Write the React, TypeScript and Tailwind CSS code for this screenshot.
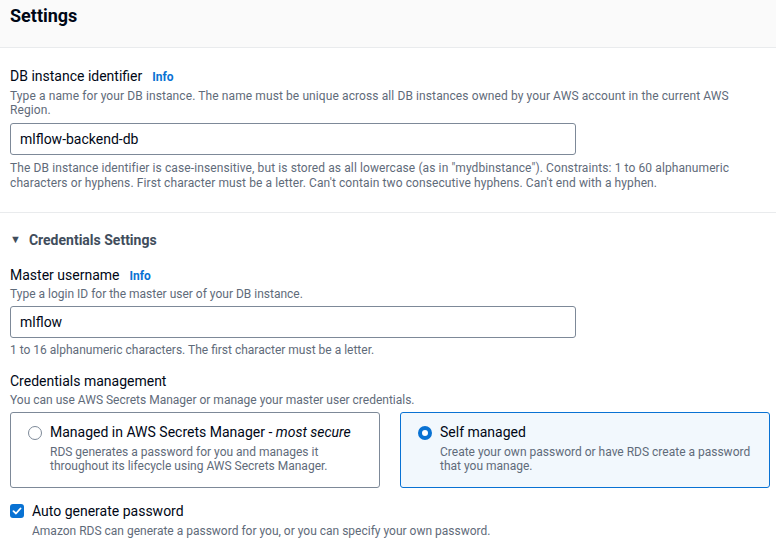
import React from "react";

const font = { fontFamily: 'Roboto, "Noto Sans", sans-serif' };

function Info() {
  return <span className="ml-[10px] text-[12px] font-bold text-[#0972d3]">Info</span>;
}

export default function App() {
  return (
    <div className="w-[776px] h-[540px] overflow-hidden bg-white text-[#000716]" style={font}>
      <div className="h-[48px] bg-[#fafafa] border-b border-[#e9ebed] px-[10px] pt-[3px]">
        <h2 className="text-[18px] font-bold leading-[26px]">Settings</h2>
      </div>
      <div className="px-[10px] pt-[17px]">
        <div className="flex items-baseline text-[14px] leading-[22px]">
          <span>DB instance identifier</span>
          <Info />
        </div>
        <p className="text-[12px] leading-[14px] text-[#5f6b7a] mt-[1px] pr-[30px] tracking-[0.1px]">
          Type a name for your DB instance. The name must be unique across all DB instances owned by your AWS account in the current AWS Region.
        </p>
        <div className="mt-[6px] w-[566px] h-[32px] border border-[#7d8998] rounded-[3px] flex items-center px-[9px] text-[14px]">
          mlflow-backend-db
        </div>
        <p className="text-[12px] leading-[15px] text-[#5f6b7a] mt-[6px] pr-[30px] tracking-[0.1px]">
          The DB instance identifier is case-insensitive, but is stored as all lowercase (as in "mydbinstance"). Constraints: 1 to 60 alphanumeric characters or hyphens. First character must be a letter. Can't contain two consecutive hyphens. Can't end with a hyphen.
        </p>
      </div>
      <div className="mt-[21px] border-t border-[#e9ebed]" />
      <div className="px-[10px] pt-[16px]">
        <div className="flex items-center text-[14px] font-bold leading-[22px] text-[#414d5c]">
          <span className="text-[11px] mr-[8px] text-[#414d5c]">▼</span>
          Credentials Settings
        </div>
        <div className="flex items-baseline text-[14px] leading-[22px] mt-[13px]">
          <span>Master username</span>
          <Info />
        </div>
        <p className="text-[12px] leading-[14px] text-[#5f6b7a]">
          Type a login ID for the master user of your DB instance.
        </p>
        <div className="mt-[5px] w-[566px] h-[32px] border border-[#7d8998] rounded-[3px] flex items-center px-[9px] text-[14px]">
          mlflow
        </div>
        <p className="text-[12px] leading-[15px] text-[#5f6b7a] mt-[5px]">
          1 to 16 alphanumeric characters. The first character must be a letter.
        </p>
        <div className="text-[14px] leading-[22px] mt-[12px]">Credentials management</div>
        <p className="text-[12px] leading-[14px] text-[#5f6b7a] mt-[1px]">
          You can use AWS Secrets Manager or manage your master user credentials.
        </p>
        <div className="grid grid-cols-2 gap-[20px] mt-[5px] w-[760px]">
          <div className="h-[76px] border border-[#7d8998] rounded-[3px] flex pl-[17px] pt-[9px]">
            <span className="mt-[4px] w-[14px] h-[14px] rounded-full border-[1.5px] border-[#7d8998] shrink-0" />
            <div className="ml-[8px]">
              <div className="text-[14px] leading-[20px]">
                Managed in AWS Secrets Manager - <i>most secure</i>
              </div>
              <p className="text-[12px] leading-[14px] text-[#5f6b7a] mt-[3px]">
                RDS generates a password for you and manages it<br />throughout its lifecycle using AWS Secrets Manager.
              </p>
            </div>
          </div>
          <div className="h-[76px] border border-[#0972d3] bg-[#f2f8fd] rounded-[3px] flex pl-[17px] pt-[9px]">
            <span className="mt-[4px] w-[14px] h-[14px] rounded-full border-[4px] border-[#0972d3] bg-white shrink-0" />
            <div className="ml-[8px]">
              <div className="text-[14px] leading-[20px]">Self managed</div>
              <p className="text-[12px] leading-[14px] text-[#5f6b7a] mt-[3px]">
                Create your own password or have RDS create a password<br />that you manage.
              </p>
            </div>
          </div>
        </div>
        <div className="flex mt-[12px]">
          <span className="mt-[4px] w-[14px] h-[14px] rounded-[3px] bg-[#0972d3] flex items-center justify-center shrink-0">
            <svg width="10" height="10" viewBox="0 0 10 10">
              <path d="M1.5 5.2 L4 7.5 L8.5 2.5" fill="none" stroke="white" strokeWidth="1.8" strokeLinecap="round" strokeLinejoin="round" />
            </svg>
          </span>
          <div className="ml-[8px]">
            <div className="text-[14px] leading-[22px]">Auto generate password</div>
            <p className="text-[12px] leading-[15px] text-[#5f6b7a] mt-[2px]">
              Amazon RDS can generate a password for you, or you can specify your own password.
            </p>
          </div>
        </div>
      </div>
    </div>
  );
}
